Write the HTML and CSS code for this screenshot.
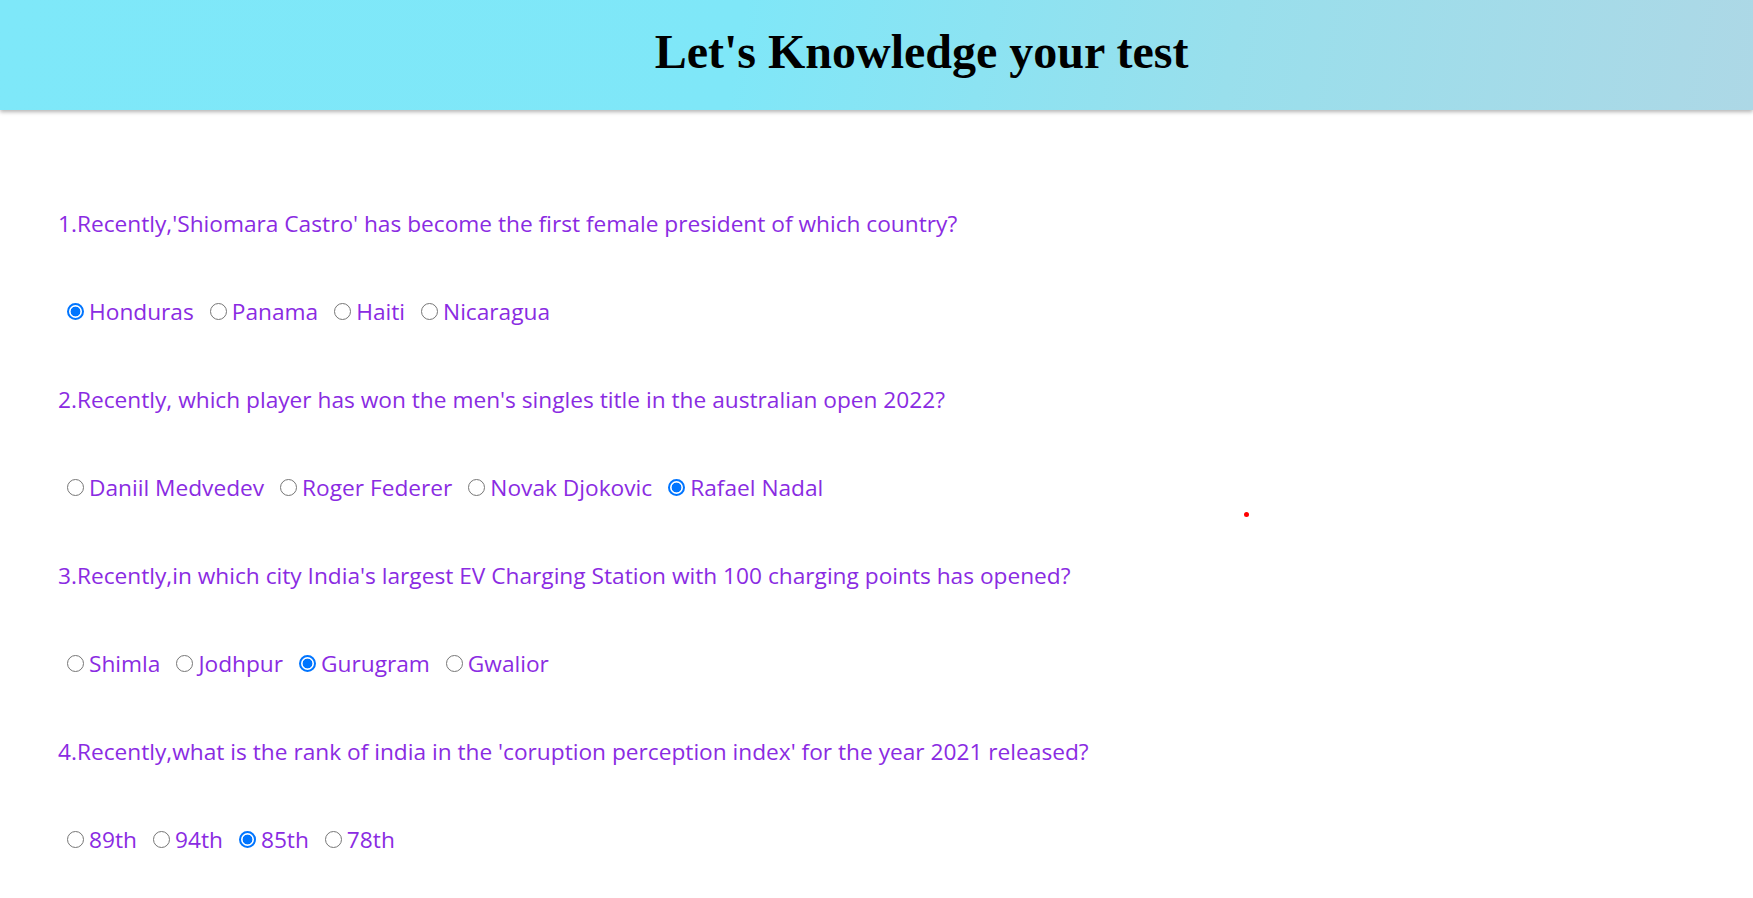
FILE: index.html
```html
<!DOCTYPE html>
<html>
<head>
<meta charset="utf-8">
<title>Quiz</title>
<link rel="stylesheet" href="styles.css">
</head>
<body>
<header class="top">
  <h1 class="title">Let's Knowledge your test</h1>
</header>
<main class="quiz">
  <p class="q">1.Recently,'Shiomara Castro' has become the first female president of which country?</p>
  <div class="opts">
    <label class="opt"><input type="radio" name="q1" checked>Honduras</label>
    <label class="opt"><input type="radio" name="q1">Panama</label>
    <label class="opt"><input type="radio" name="q1">Haiti</label>
    <label class="opt"><input type="radio" name="q1">Nicaragua</label>
  </div>
  <p class="q">2.Recently, which player has won the men's singles title in the australian open 2022?</p>
  <div class="opts">
    <label class="opt"><input type="radio" name="q2">Daniil Medvedev</label>
    <label class="opt"><input type="radio" name="q2">Roger Federer</label>
    <label class="opt"><input type="radio" name="q2">Novak Djokovic</label>
    <label class="opt"><input type="radio" name="q2" checked>Rafael Nadal</label>
  </div>
  <p class="q">3.Recently,in which city India's largest EV Charging Station with 100 charging points has opened?</p>
  <div class="opts">
    <label class="opt"><input type="radio" name="q3">Shimla</label>
    <label class="opt"><input type="radio" name="q3">Jodhpur</label>
    <label class="opt"><input type="radio" name="q3" checked>Gurugram</label>
    <label class="opt"><input type="radio" name="q3">Gwalior</label>
  </div>
  <p class="q">4.Recently,what is the rank of india in the 'coruption perception index' for the year 2021 released?</p>
  <div class="opts">
    <label class="opt"><input type="radio" name="q4">89th</label>
    <label class="opt"><input type="radio" name="q4">94th</label>
    <label class="opt"><input type="radio" name="q4" checked>85th</label>
    <label class="opt"><input type="radio" name="q4">78th</label>
  </div>
</main>
<span class="dot"></span>
</body>
</html>
```
FILE: styles.css
```css
html, body {
  margin: 0;
  padding: 0;
  background: #fff;
  overflow: hidden;
}
body {
  position: relative;
  height: 898px;
}
.top {
  height: 110px;
  display: flex;
  align-items: center;
  justify-content: center;
  background: linear-gradient(100deg, #7ee8f9 0%, #7fe7f8 42%, #99dfec 70%, #add8e6 100%);
  box-shadow: 0 2px 4px rgba(0, 0, 0, 0.3);
}
.title {
  margin: 0;
  padding: 0 0 8px 90px;
  font-family: "Liberation Serif", "Times New Roman", serif;
  font-weight: bold;
  font-size: 48px;
  color: #000;
}
.quiz {
  display: flex;
  flex-direction: column;
  gap: 56px;
  padding: 98px 0 0 58px;
  font-family: "Open Sans", "Noto Sans", sans-serif;
  font-size: 22.7px;
  color: #8a2be2;
}
.q {
  margin: 0;
  height: 32px;
  line-height: 32px;
}
.opts {
  display: flex;
  align-items: center;
  height: 32px;
  line-height: 32px;
}
.opt {
  display: flex;
  align-items: center;
  margin-right: 7px;
}
.opt input {
  -webkit-appearance: none;
  appearance: none;
  box-sizing: border-box;
  width: 17px;
  height: 17px;
  margin: 0 5px 0 9px;
  border: 1.6px solid #767676;
  border-radius: 50%;
  background: #fff;
  position: relative;
  top: -1px;
}
.opt input:checked {
  border: 2px solid #0075ff;
  background: radial-gradient(circle, #0075ff 0 4.6px, #fff 5.2px);
}
.dot {
  position: absolute;
  left: 1244px;
  top: 512px;
  width: 5px;
  height: 5px;
  border-radius: 50%;
  background: #f00;
}
```
